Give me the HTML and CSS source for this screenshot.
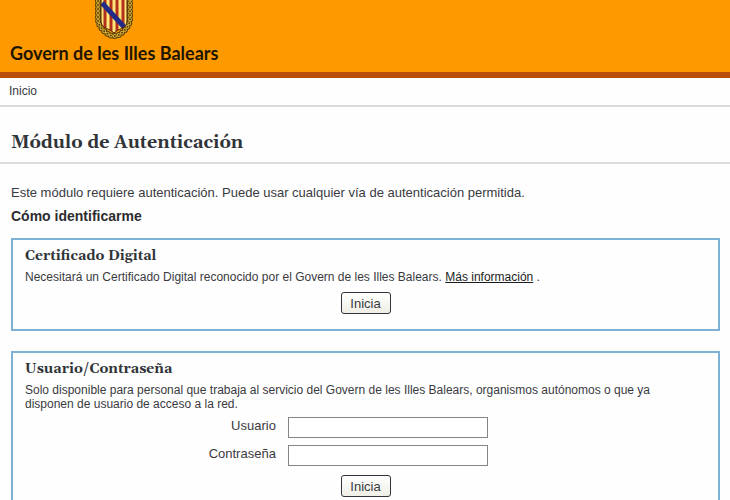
FILE: index.html
```html
<!DOCTYPE html>
<html lang="es">
<head>
    <meta charset="UTF-8">
    <meta name="viewport" content="width=device-width, initial-scale=1.0">
    <title>Módulo de Autenticación</title>
    <link rel="stylesheet" href="styles.css">
</head>
<body>
    <header>
        <div class="brand">
            <svg class="shield" width="40" height="41" viewBox="0 0 40 41" aria-hidden="true">
                <g fill="none" stroke-linecap="round">
                    <path d="M4 -3 V19 C4 24 7 28 10 31 C13 34 16 36 20 36 C24 36 27 34 30 31 C33 28 36 24 36 19 V-3" stroke="#5a4204" stroke-width="6" stroke-dasharray="0 4"/>
                    <path d="M4 -3 V19 C4 24 7 28 10 31 C13 34 16 36 20 36 C24 36 27 34 30 31 C33 28 36 24 36 19 V-3" stroke="#d8ad38" stroke-width="4" stroke-dasharray="0 4"/>
                    <path d="M4 -3 V19 C4 24 7 28 10 31 C13 34 16 36 20 36 C24 36 27 34 30 31 C33 28 36 24 36 19 V-3" stroke="#5a4204" stroke-width="2" stroke-dasharray="0 4"/>
                </g>
                <clipPath id="field"><path d="M7 -3 H33 V20 C33 27 29 28 24 30 L20 33 L16 30 C11 28 7 27 7 20 Z"/></clipPath>
                <g clip-path="url(#field)">
                    <rect x="7" y="-3" width="26" height="38" fill="#ffe678"/>
                    <path d="M11 0V35M17 0V35M23 0V35M29 0V35" stroke="#b5301c" stroke-width="3"/>
                    <path d="M8 3 L31 28" stroke="#222c88" stroke-width="5"/>
                </g>
                <path d="M7 -3 V20 C7 27 11 28 16 30 L20 33 L24 30 C29 28 33 27 33 20 V-3" fill="none" stroke="#4a2500" stroke-width="1"/>
            </svg>
            <span class="brand-name">Govern de les Illes Balears</span>
        </div>
    </header>
    <nav>
        <a href="#">Inicio</a>
    </nav>
    <h1>Módulo de Autenticación</h1>
    <main class="content">
        <p class="intro">Este módulo requiere autenticación. Puede usar cualquier vía de autenticación permitida.</p>
        <h2>Cómo identificarme</h2>
        <section class="box">
            <h3>Certificado Digital</h3>
            <p>Necesitará un Certificado Digital reconocido por el Govern de les Illes Balears. <a href="#">Más información</a> .</p>
            <form>
                <button type="submit">Inicia</button>
            </form>
        </section>
        <section class="box">
            <h3>Usuario/Contraseña</h3>
            <p>Solo disponible para personal que trabaja al servicio del Govern de les Illes Balears, organismos autónomos o que ya disponen de usuario de acceso a la red.</p>
            <form>
                <div class="field">
                    <label for="usuario">Usuario</label>
                    <input type="text" id="usuario" name="usuario">
                </div>
                <div class="field">
                    <label for="contrasena">Contraseña</label>
                    <input type="password" id="contrasena" name="contrasena">
                </div>
                <button type="submit">Inicia</button>
            </form>
        </section>
    </main>
</body>
</html>
```
FILE: styles.css
```css
body {
    margin: 0;
    background-color: #fefefe;
    color: #3a3a3e;
    font-family: "Liberation Sans", Arial, sans-serif;
    font-size: 12px;
    line-height: 14px;
}
header {
    display: flex;
    height: 72px;
    padding: 0 10px;
    background-color: #ff9900;
    border-bottom: 6px solid #b9500a;
}
.brand {
    display: flex;
    flex-direction: column;
    align-items: center;
}
.shield {
    display: block;
}
.brand-name {
    color: #201500;
    font-family: Lato, "Open Sans", sans-serif;
    font-size: 18px;
    font-weight: bold;
    line-height: 24px;
}
nav {
    padding: 6px 9px 7px;
    border-bottom: 2px solid #dadada;
}
nav a {
    color: #3a3a3e;
    text-decoration: none;
}
h1, h3 {
    margin: 0;
    color: #303438;
    font-family: Gelasio, Georgia, "DejaVu Serif", serif;
    font-weight: bold;
}
h1 {
    padding: 24px 11px 7px;
    border-bottom: 2px solid #dcdcda;
    font-size: 18px;
    line-height: 24px;
}
.content {
    padding: 22px 10px 22px 11px;
}
.intro {
    margin: 0 0 8px;
    font-size: 13px;
}
h2 {
    margin: 0 0 14px;
    color: #2c2c30;
    font-size: 14px;
    line-height: 16px;
}
.box {
    margin-bottom: 20px;
    padding: 7px 12px 15px;
    border: 2px solid #7fb0d6;
}
.box h3 {
    font-size: 14px;
    line-height: 18px;
}
.box p {
    margin: 5px 0 6px;
    padding-right: 16px;
}
.box a {
    color: #1c1c20;
}
form {
    display: flex;
    flex-direction: column;
    align-items: center;
    font-size: 13px;
}
.field {
    display: grid;
    grid-template-columns: 3fr 5fr;
    column-gap: 12px;
    width: 100%;
    margin-bottom: 7px;
}
.field label {
    justify-self: end;
    padding-top: 2px;
}
.field input {
    box-sizing: border-box;
    width: 200px;
    height: 21px;
    border: 1px solid #858585;
    background-color: #fff;
}
button {
    width: 50px;
    height: 22px;
    margin-top: 2px;
    padding: 0;
    border: 1px solid #30343c;
    border-radius: 3px;
    background: linear-gradient(#fff, #efefe6);
    color: #3a3a3e;
    font-family: inherit;
    font-size: 13px;
}
```
